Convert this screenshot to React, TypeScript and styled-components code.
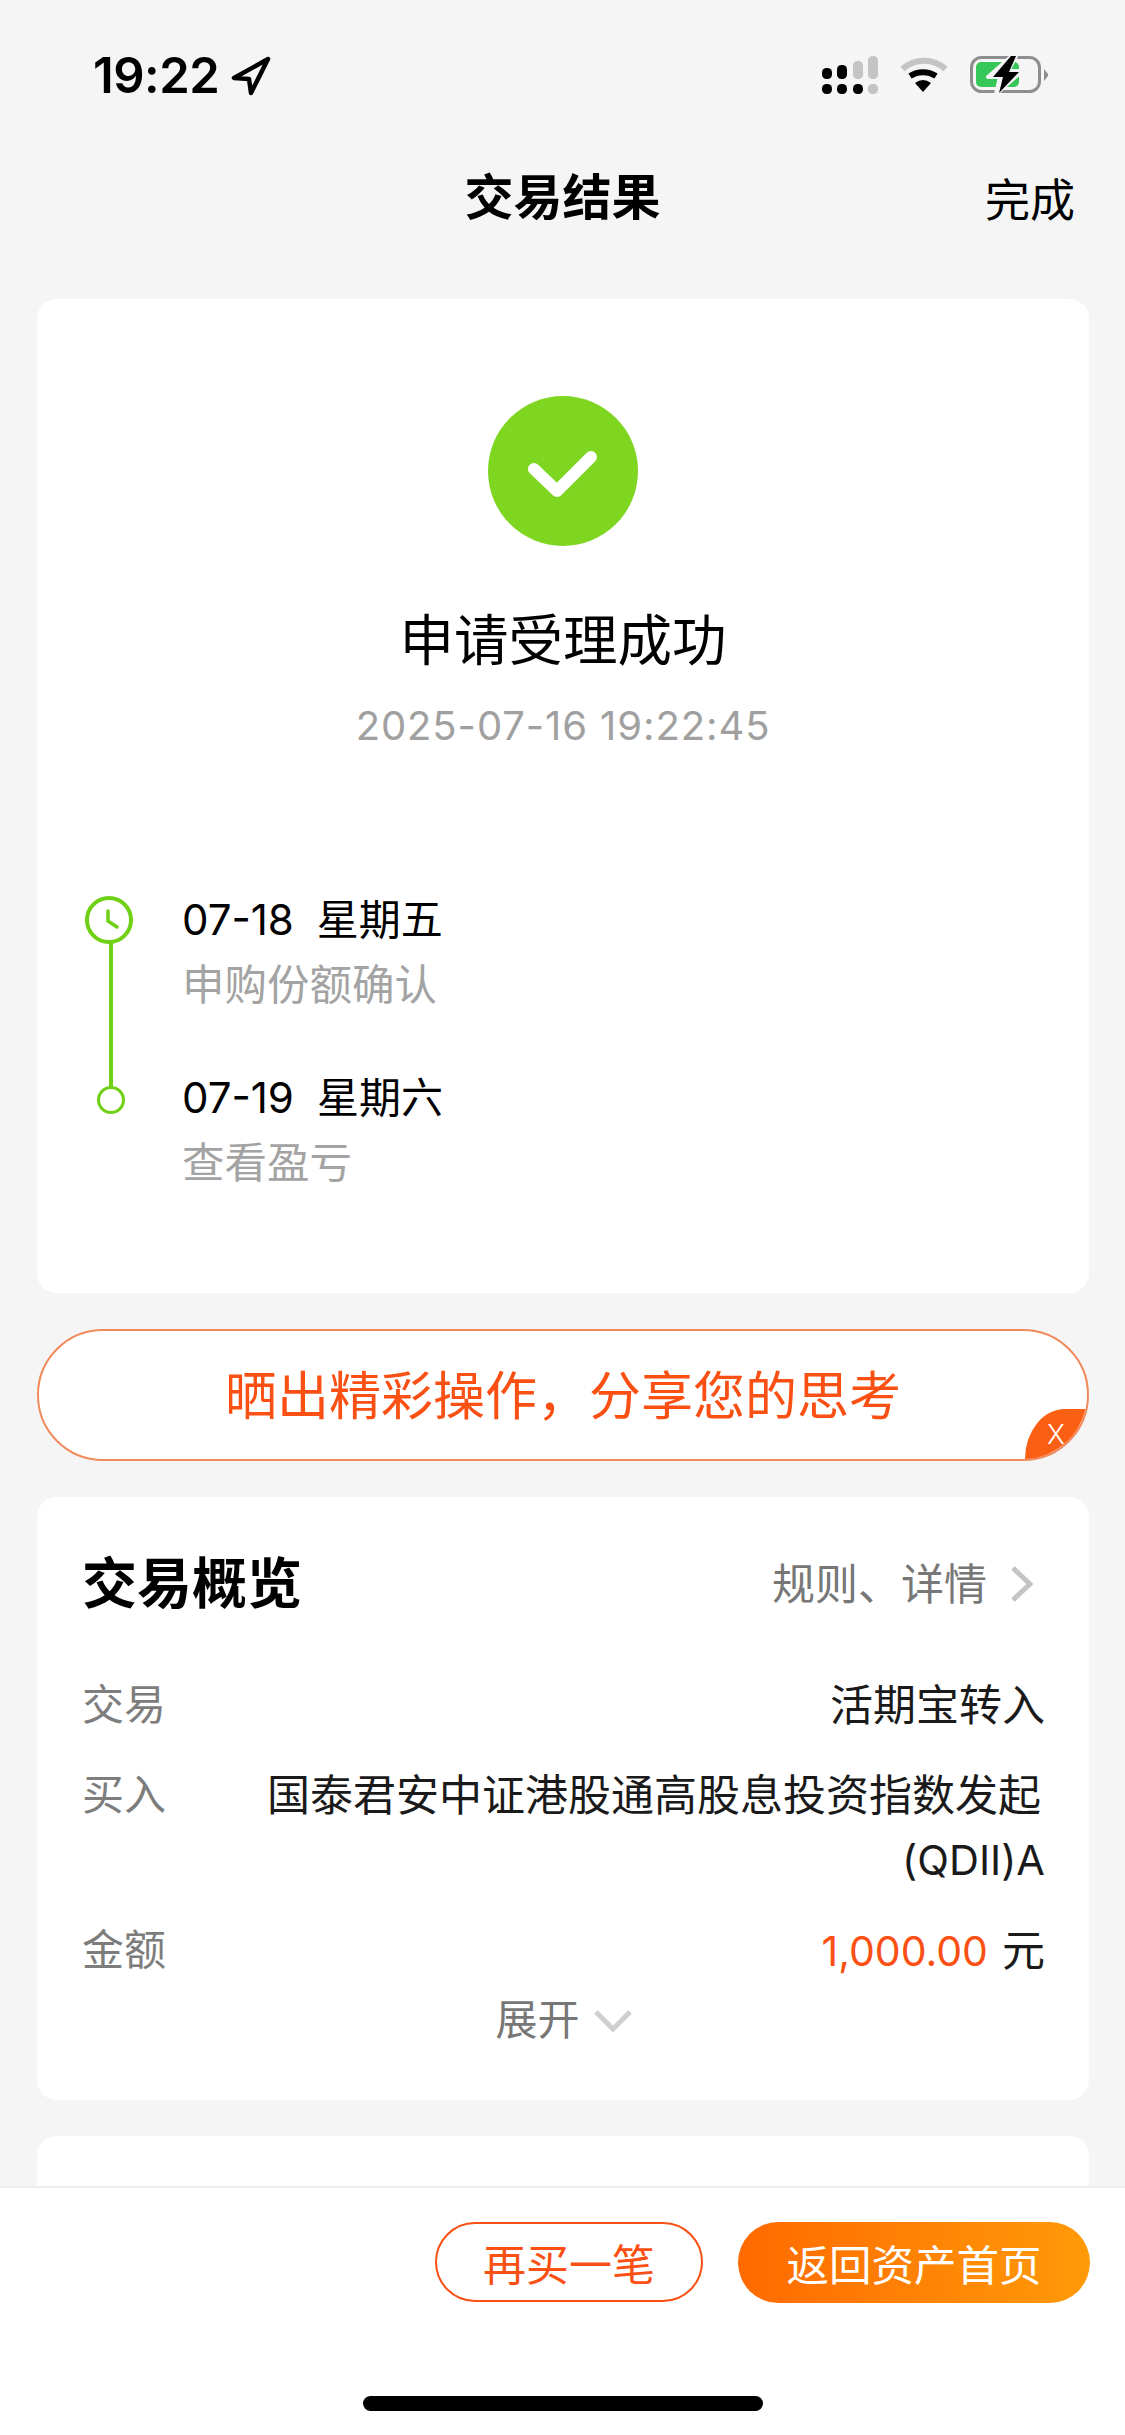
import React from "react";
import styled, { createGlobalStyle } from "styled-components";

const FONT = `"Inter", "Noto Sans CJK SC", sans-serif`;
const ORANGE = "#fa5014";
const GREEN = "#6fd016";

const GlobalStyle = createGlobalStyle`
  html, body {
    margin: 0;
    padding: 0;
    background: #f5f5f5;
  }
  body {
    font-family: ${FONT};
    color: #000;
  }
`;

const Page = styled.div`
  position: relative;
  width: 1125px;
  height: 2435px;
  overflow: hidden;
  display: flex;
  flex-direction: column;
  background: #f5f5f5;
`;

const StatusBar = styled.div`
  height: 167px;
  flex: none;
  display: flex;
  justify-content: space-between;
  align-items: flex-start;
  padding: 51px 76px 0 93px;
  box-sizing: border-box;
`;
const Clock = styled.div`
  display: flex;
  align-items: center;
  gap: 12px;
  font-size: 49px;
  line-height: 50px;
  font-weight: 600;
  letter-spacing: -0.5px;
`;
const StatusIcons = styled.div`
  display: flex;
  align-items: center;
  gap: 22px;
  padding-top: 5px;
`;

const NavBar = styled.div`
  height: 62px;
  flex: none;
  display: flex;
  justify-content: center;
  align-items: center;
  position: relative;
`;
const NavTitle = styled.h1`
  margin: 0;
  font-size: 49px;
  font-weight: 700;
  line-height: 62px;
`;
const NavAction = styled.span`
  position: absolute;
  right: 50px;
  top: 3px;
  font-size: 45px;
  line-height: 62px;
`;

const Content = styled.div`
  display: flex;
  flex-direction: column;
  gap: 36px;
  padding: 70px 36px 0 37px;
`;
const Card = styled.section`
  background: #fff;
  border-radius: 20px;
`;

const ResultCard = styled(Card)`
  height: 994px;
  box-sizing: border-box;
  padding-top: 97px;
`;
const ResultHead = styled.div`
  display: flex;
  flex-direction: column;
  align-items: center;
`;
const ResultTitle = styled.div`
  margin-top: 62px;
  font-size: 54.5px;
  line-height: 64px;
`;
const ResultTime = styled.div`
  margin-top: 30px;
  font-size: 40px;
  line-height: 48px;
  color: #a0a0a0;
  letter-spacing: 0.9px;
`;

const Timeline = styled.div`
  display: grid;
  grid-template-columns: 97px 1fr;
  grid-template-rows: 178px 100px;
  margin-top: 146px;
  padding-left: 48px;
`;
const Rail = styled.div`
  position: relative;
  display: flex;
  justify-content: center;
  width: 48px;
`;
const RailLine = styled.div`
  position: absolute;
  top: 45px;
  left: 24px;
  width: 4px;
  height: 148px;
  background: ${GREEN};
`;
const RailDot = styled.div`
  position: absolute;
  top: 190px;
  left: 12px;
  width: 28px;
  height: 28px;
  box-sizing: border-box;
  border: 3px solid ${GREEN};
  border-radius: 50%;
  background: #fff;
`;
const Step = styled.div`
  display: flex;
  flex-direction: column;
  gap: 16px;
`;
const StepDate = styled.div`
  display: flex;
  gap: 23px;
  font-size: 42px;
  line-height: 48px;
`;
const StepNote = styled.div`
  font-size: 42.5px;
  line-height: 50px;
  color: #a3a3a3;
`;

const ShareBanner = styled.div`
  position: relative;
  height: 132px;
  box-sizing: border-box;
  overflow: hidden;
  padding-bottom: 6px;
  display: flex;
  align-items: center;
  justify-content: center;
  background: #fff;
  border: 2px solid #f08a5c;
  border-radius: 66px;
  color: ${ORANGE};
  font-size: 52px;
`;
const BannerClose = styled.div`
  position: absolute;
  right: 0;
  bottom: 0;
  width: 62px;
  height: 50px;
  display: flex;
  align-items: center;
  justify-content: center;
  background: #fb5f14;
  border-radius: 40px 0 0 0 / 50px 0 0 0;
  color: #fff;
  font-size: 27px;
  font-weight: 300;
`;

const OverviewCard = styled(Card)`
  height: 603px;
  box-sizing: border-box;
  padding: 50px 44px 0 45px;
`;
const OverviewHead = styled.div`
  display: flex;
  justify-content: space-between;
  align-items: center;
  height: 64px;
  margin-bottom: 62px;
  padding-right: 12px;
`;
const OverviewTitle = styled.h2`
  margin: 0;
  font-size: 55px;
  font-weight: 700;
`;
const RulesLink = styled.div`
  display: flex;
  align-items: center;
  gap: 23px;
  padding-top: 4px;
  font-size: 43px;
  color: #777;
`;
const RulesArrow = styled.span`
  display: flex;
  margin-top: 6px;
`;
const InfoRow = styled.div<{ $height: number }>`
  display: flex;
  justify-content: space-between;
  height: ${(p) => p.$height}px;
  font-size: 43px;
  line-height: 64px;
`;
const InfoLabel = styled.span`
  flex: none;
  font-size: 42px;
  color: #7d7d7d;
`;
const InfoValue = styled.span`
  width: 800px;
  text-align: right;
  color: #1a1a1a;
`;
const FundName = styled.span`
  padding-right: 4px;
`;
const FundClass = styled.span`
  font-size: 41.5px;
`;
const Amount = styled.span`
  color: ${ORANGE};
  font-size: 41px;
  margin-right: 14px;
`;
const Expand = styled.div`
  display: flex;
  justify-content: center;
  align-items: center;
  gap: 14px;
  font-size: 42px;
  line-height: 56px;
  color: #777;
`;

const NextCard = styled(Card)`
  height: 200px;
`;

const BottomBar = styled.div`
  position: absolute;
  left: 0;
  right: 0;
  bottom: 0;
  height: 249px;
  box-sizing: border-box;
  border-top: 2px solid #eeeeee;
  background: #fff;
  display: flex;
  flex-direction: column;
  align-items: center;
`;
const Actions = styled.div`
  align-self: flex-end;
  display: flex;
  gap: 35px;
  padding: 34px 35px 0 0;
`;
const OutlineButton = styled.div`
  width: 268px;
  height: 80px;
  box-sizing: border-box;
  display: flex;
  align-items: center;
  justify-content: center;
  border: 2px solid ${ORANGE};
  border-radius: 40px;
  color: ${ORANGE};
  font-size: 43px;
`;
const FilledButton = styled.div`
  width: 352px;
  height: 81px;
  display: flex;
  align-items: center;
  justify-content: center;
  border-radius: 41px;
  background: linear-gradient(90deg, #ff6a00, #ff9a08);
  color: #fff;
  font-size: 42.5px;
`;
const HomeIndicator = styled.div`
  width: 400px;
  height: 15px;
  margin-top: 93px;
  border-radius: 8px;
  background: #000;
`;

function LocationArrow() {
  return (
    <svg width="40" height="40" viewBox="0 0 40 40" fill="none">
      <path d="M37 3 L3 22 L18 23 L20 37 Z" stroke="#000" strokeWidth="4.5" strokeLinejoin="round" />
    </svg>
  );
}

function Signal() {
  const Dot = (x: number, y: number, h: number, fill: string) => (
    <rect key={`${x}-${y}`} x={x} y={y} width="10" height={h} rx="4.5" fill={fill} />
  );
  return (
    <svg width="56" height="38" viewBox="0 0 56 38">
      {Dot(0, 12, 11, "#000")}
      {Dot(0, 28, 10, "#000")}
      {Dot(15, 9, 14, "#000")}
      {Dot(15, 28, 10, "#000")}
      {Dot(31, 5, 18, "#c4c4c4")}
      {Dot(31, 28, 10, "#000")}
      {Dot(46, 0, 23, "#c4c4c4")}
      {Dot(46, 28, 10, "#c4c4c4")}
    </svg>
  );
}

function Wifi() {
  return (
    <svg width="48" height="36" viewBox="0 0 48 36" fill="none">
      <path d="M2.5 12 A32 32 0 0 1 45.5 12" stroke="#c4c4c4" strokeWidth="6" />
      <path d="M10 19 A24 24 0 0 1 36 19" stroke="#000" strokeWidth="6" />
      <path d="M23 35 L15 26 Q23 20 31 26 Z" fill="#000" />
    </svg>
  );
}

function Battery() {
  return (
    <svg width="79" height="38" viewBox="0 0 79 38">
      <rect x="1.5" y="1.5" width="68" height="34" rx="10" fill="none" stroke="#8e8e8e" strokeWidth="3" />
      <path d="M74 13 L78 18 V20 L74 25 Z" fill="#8e8e8e" />
      <rect x="6" y="6" width="43" height="25" rx="5" fill="#35c759" />
      <path d="M42 0 L18 21 H30 L26 38 L52 15 H38 L46 0 Z" fill="#f5f5f5" stroke="#f5f5f5" strokeWidth="4" strokeLinejoin="round" />
      <path d="M41 0 L23 21 H33 L29 37 L49 16 H39 L46 0 Z" fill="#000" />
    </svg>
  );
}

function SuccessBadge() {
  return (
    <svg width="150" height="150" viewBox="0 0 150 150">
      <circle cx="75" cy="75" r="75" fill="#7fd620" />
      <path d="M46 73 L69 95 L103 61" fill="none" stroke="#fff" strokeWidth="12" strokeLinecap="round" strokeLinejoin="round" />
    </svg>
  );
}

function ClockDot() {
  return (
    <svg width="48" height="48" viewBox="0 0 48 48" fill="none">
      <circle cx="24" cy="24" r="22" fill="#fff" stroke={GREEN} strokeWidth="4" />
      <path d="M23 15 V25 L32 31" stroke={GREEN} strokeWidth="3.5" strokeLinecap="round" strokeLinejoin="round" />
    </svg>
  );
}

function Chevron({ dir, color }: { dir: "right" | "down"; color: string }) {
  const d = dir === "right" ? "M3 3 L20 19 L3 35" : "M2 3 L19 20 L36 3";
  const w = dir === "right" ? 23 : 38;
  const h = dir === "right" ? 38 : 23;
  return (
    <svg width={w} height={h} viewBox={`0 0 ${w} ${h}`} fill="none">
      <path d={d} stroke={color} strokeWidth="5" />
    </svg>
  );
}

export default function App() {
  return (
    <Page>
      <GlobalStyle />
      <StatusBar>
        <Clock>
          19:22
          <LocationArrow />
        </Clock>
        <StatusIcons>
          <Signal />
          <Wifi />
          <Battery />
        </StatusIcons>
      </StatusBar>
      <NavBar>
        <NavTitle>交易结果</NavTitle>
        <NavAction>完成</NavAction>
      </NavBar>

      <Content>
        <ResultCard>
          <ResultHead>
            <SuccessBadge />
            <ResultTitle>申请受理成功</ResultTitle>
            <ResultTime>2025-07-16 19:22:45</ResultTime>
          </ResultHead>
          <Timeline>
            <Rail>
              <ClockDot />
              <RailLine />
              <RailDot />
            </Rail>
            <Step>
              <StepDate>
                <span>07-18</span>
                <span>星期五</span>
              </StepDate>
              <StepNote>申购份额确认</StepNote>
            </Step>
            <span />
            <Step>
              <StepDate>
                <span>07-19</span>
                <span>星期六</span>
              </StepDate>
              <StepNote>查看盈亏</StepNote>
            </Step>
          </Timeline>
        </ResultCard>

        <ShareBanner>
          晒出精彩操作，分享您的思考
          <BannerClose>X</BannerClose>
        </ShareBanner>

        <OverviewCard>
          <OverviewHead>
            <OverviewTitle>交易概览</OverviewTitle>
            <RulesLink>
              规则、详情
              <RulesArrow>
                <Chevron dir="right" color="#c4c4c4" />
              </RulesArrow>
            </RulesLink>
          </OverviewHead>
          <InfoRow $height={90}>
            <InfoLabel>交易</InfoLabel>
            <InfoValue>活期宝转入</InfoValue>
          </InfoRow>
          <InfoRow $height={155}>
            <InfoLabel>买入</InfoLabel>
            <InfoValue>
              <FundName>国泰君安中证港股通高股息投资指数发起</FundName>
              <br />
              <FundClass>(QDII)A</FundClass>
            </InfoValue>
          </InfoRow>
          <InfoRow $height={74}>
            <InfoLabel>金额</InfoLabel>
            <InfoValue>
              <Amount>1,000.00</Amount>元
            </InfoValue>
          </InfoRow>
          <Expand>
            展开
            <Chevron dir="down" color="#cfcfcf" />
          </Expand>
        </OverviewCard>

        <NextCard />
      </Content>

      <BottomBar>
        <Actions>
          <OutlineButton>再买一笔</OutlineButton>
          <FilledButton>返回资产首页</FilledButton>
        </Actions>
        <HomeIndicator />
      </BottomBar>
    </Page>
  );
}
